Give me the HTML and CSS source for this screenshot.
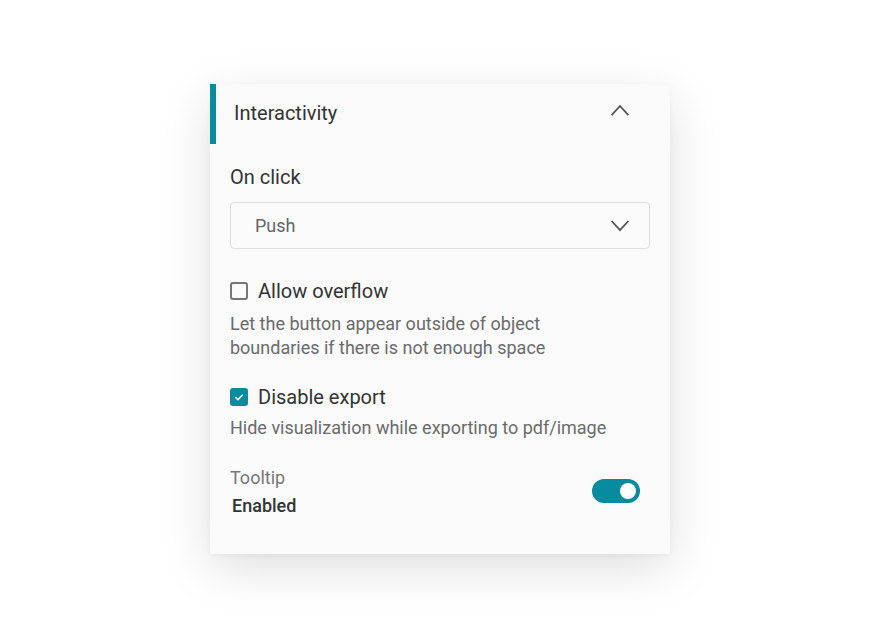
FILE: index.html
```html
<!DOCTYPE html>
<html>
  <head>
    <meta charset="UTF-8" />
    <title>Interactivity</title>
    <link rel="stylesheet" href="styles.css">
  </head>
  <body>
    <div class="panel">
      <div class="panel-head">
        <span class="panel-title">Interactivity</span>
        <svg class="chevron" viewBox="0 0 24 24">
          <path d="M2 17 L12 6 L22 17"></path>
        </svg>
      </div>
      <div class="panel-body">
        <div class="field">
          <label class="field-label">On click</label>
          <div class="select">
            <span>Push</span>
            <svg class="chevron" viewBox="0 0 24 24">
              <path d="M2 6 L12 17 L22 6"></path>
            </svg>
          </div>
        </div>

        <div class="option">
          <div class="checkbox">
            <span class="box"></span>
            <span class="option-label">Allow overflow</span>
          </div>
          <p class="hint">Let the button appear outside of object<br>boundaries if there is not enough space</p>
        </div>

        <div class="option option-second">
          <div class="checkbox">
            <span class="box checked">
              <svg viewBox="0 0 16 16"><path d="M3.8 8.3 L6.8 11 L12.2 5.4"></path></svg>
            </span>
            <span class="option-label">Disable export</span>
          </div>
          <p class="hint">Hide visualization while exporting to pdf/image</p>
        </div>

        <div class="toggle-row">
          <div class="toggle-text">
            <span class="toggle-label">Tooltip</span>
            <span class="toggle-value">Enabled</span>
          </div>
          <span class="switch on"><span class="knob"></span></span>
        </div>
      </div>
    </div>
  </body>
</html>
```

FILE: styles.css
```css
:root {
  --teal: #078b9e;
  --text: #333;
  --muted: #6b6b6b;
  --panel: #fafafa;
}

body {
  font-family: Roboto, "Noto Sans", sans-serif;
  background: #fff;
  margin: 0;
  min-height: 640px;
  box-sizing: border-box;
  display: flex;
  justify-content: center;
  align-items: flex-start;
  padding-top: 84px;
}

.panel {
  width: 460px;
  height: 470px;
  box-sizing: border-box;
  background: var(--panel);
  border-radius: 2px;
  box-shadow: 0 14px 50px rgba(0, 0, 0, 0.13), 0 2px 6px rgba(0, 0, 0, 0.04);
  color: var(--text);
}

.panel-head {
  height: 60px;
  display: flex;
  align-items: center;
  justify-content: space-between;
  padding: 0 40px 0 18px;
  border-left: 6px solid var(--teal);
}

.panel-title {
  font-size: 20px;
  margin-top: -3px;
}

.chevron {
  width: 20px;
  height: 20px;
  fill: none;
  stroke: #555;
  stroke-width: 2.2;
}

.panel-head .chevron {
  margin-top: -6px;
}

.panel-body {
  padding: 21px 20px 0 20px;
  display: flex;
  flex-direction: column;
}

.field {
  display: flex;
  flex-direction: column;
  gap: 13px;
}

.field-label {
  font-size: 20px;
  line-height: 24px;
}

.select {
  height: 47px;
  box-sizing: border-box;
  border: 1px solid #dedede;
  border-radius: 4px;
  background: #fbfbfb;
  display: flex;
  align-items: center;
  justify-content: space-between;
  padding: 0 19px 0 24px;
  font-size: 18px;
  color: #666;
}

.option {
  margin-top: 30px;
  display: flex;
  flex-direction: column;
  gap: 9px;
}

.option-second {
  margin-top: 25px;
  gap: 7px;
}

.checkbox {
  display: flex;
  align-items: center;
  gap: 10px;
  height: 24px;
}

.box {
  width: 18px;
  height: 18px;
  box-sizing: border-box;
  border: 2px solid #777;
  border-radius: 3px;
  display: flex;
  align-items: center;
  justify-content: center;
}

.box.checked {
  background: var(--teal);
  border-color: var(--teal);
}

.box svg {
  width: 16px;
  height: 16px;
  fill: none;
  stroke: #fff;
  stroke-width: 1.8;
}

.option-label {
  font-size: 20px;
}

.hint {
  margin: 0;
  font-size: 18px;
  line-height: 24px;
  color: var(--muted);
}

.toggle-row {
  margin-top: 27px;
  display: flex;
  align-items: center;
  justify-content: space-between;
  padding-right: 10px;
}

.toggle-text {
  display: flex;
  flex-direction: column;
  gap: 6px;
}

.toggle-label {
  font-size: 18px;
  line-height: 22px;
  color: #777;
}

.toggle-value {
  font-size: 18px;
  line-height: 22px;
  font-weight: 500;
  padding-left: 2px;
}

.switch {
  width: 48px;
  height: 24px;
  border-radius: 12px;
  background: #bbb;
  display: flex;
  align-items: center;
  padding: 0 4px;
  box-sizing: border-box;
  margin-top: -2px;
}

.switch.on {
  background: var(--teal);
  justify-content: flex-end;
}

.knob {
  width: 16px;
  height: 16px;
  border-radius: 50%;
  background: #fff;
}
```
